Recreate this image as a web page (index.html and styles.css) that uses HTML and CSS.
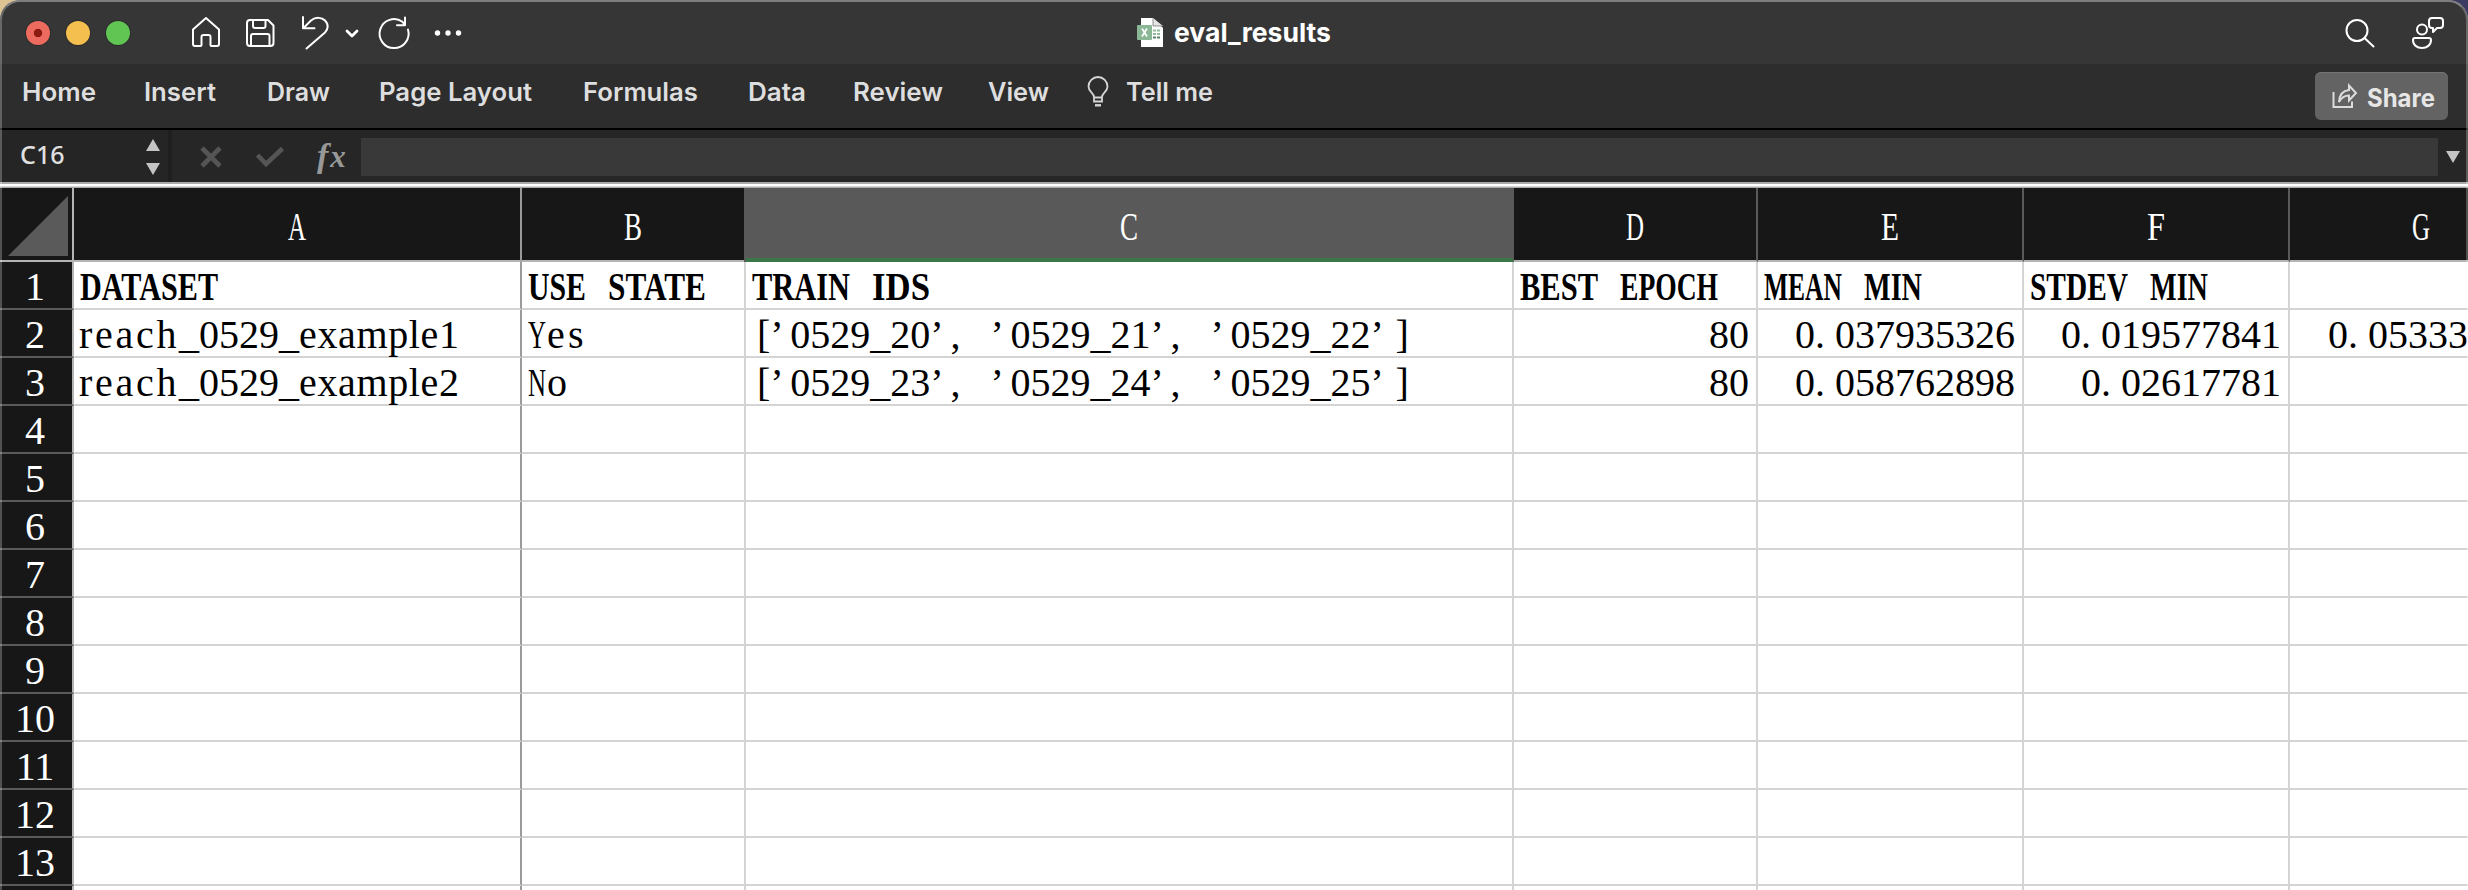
FILE: index.html
```html
<!DOCTYPE html>
<html lang="en">
<head>
<meta charset="utf-8">
<title>eval_results</title>
<link rel="stylesheet" href="styles.css">
</head>
<body>
<div class="desktop">
<div class="window">
  <header class="titlebar">
    <div class="lights"><i class="light red"></i><i class="light amber"></i><i class="light green"></i></div>
    <svg class="tools" width="280" height="64" viewBox="190 0 280 64">
      <path d="M193 28.5 L206 17 L219 28.5 V43 Q219 45 217 45 H211.500 Q210.500 45 210.500 44 V36 Q210.500 34 208.500 34 H203.500 Q201.500 34 201.500 36 V44 Q201.500 45 200.500 45 H195 Q193 45 193 43 Z"/>
      <path d="M250 19 H268 L273.500 24.500 V42 Q273.500 45 270.500 45 H250 Q247 45 247 42 V22 Q247 19 250 19 Z M253 19 V25 Q253 27 255 27 H263.500 Q265.500 27 265.500 25 V19 M251 45 V35 Q251 33 253 33 H267.500 Q269.500 33 269.500 35 V45"/>
      <path d="M303 16 V27.300 H314.500 M303.500 27 L311 19.500 C316 15.500 322 16.500 325 19.500 C329 23.500 328 28.500 325 31.500 L306.500 47.500"/>
      <path class="bold" d="M347 30 L352 35 L357 30"/>
      <path d="M408 28.500 A14.500 14.500 0 1 1 402.500 20.800 L405 24 M405 16.500 V24.300 H397"/>
      <g class="dots"><circle cx="437.500" cy="32" r="2.700"/><circle cx="448" cy="32" r="2.700"/><circle cx="458.500" cy="32" r="2.700"/></g>
    </svg>
    <div class="doc">
      <svg width="28" height="32" viewBox="0 0 28 32">
        <path d="M5 1 H17 L27 11 V30 H5 Z" fill="#fff"/>
        <path d="M17 1 V9 H27" fill="#e4e4e4" stroke="#777" stroke-width=".8"/>
        <path d="M17 12.500h3v2h-3z M21 12.500h3v2h-3z M17 16h3v2h-3z M21 16h3v2h-3z" fill="#8fbb9b"/>
        <path d="M17 19.500h3v2h-3z M21 19.500h3v2h-3z" fill="#5f8069"/>
        <rect x="1" y="8" width="15" height="15" rx="1" fill="#8ab897"/>
        <path d="M6 11.500 L11 19.500 M11 11.500 L6 19.500" stroke="#fff" stroke-width="1.700"/>
      </svg>
      <span class="fit" data-w="157">eval_results</span>
    </div>
    <svg class="right-tools" width="110" height="64" viewBox="2340 0 110 64">
      <circle cx="2357" cy="29.500" r="10.500"/><path d="M2364.500 37 L2373.500 45.500"/>
      <circle cx="2422" cy="28.500" r="5"/>
      <path d="M2415 37 H2429 Q2431 37 2431 39 C2431 44 2427 47 2422 47 C2417 47 2413 44 2413 39 Q2413 37 2415 37 Z"/>
      <path d="M2432 17 H2440 Q2443 17 2443 20 V24 Q2443 27 2440 27 H2437 L2433 31 V27 H2432 Q2429 27 2429 24 V20 Q2429 17 2432 17 Z"/>
    </svg>
  </header>

  <nav class="ribbon">
    <div class="tabs">
      <span class="fit" data-w="74">Home</span>
      <span class="fit" data-w="72">Insert</span>
      <span class="fit" data-w="63">Draw</span>
      <span class="fit" data-w="153">Page Layout</span>
      <span class="fit" data-w="115">Formulas</span>
      <span class="fit" data-w="58">Data</span>
      <span class="fit" data-w="90">Review</span>
      <span class="fit" data-w="61">View</span>
      <svg width="24" height="34" viewBox="0 0 24 34">
        <path d="M8 21 C8 17 2.500 16 2.500 10.500 A9.500 9.500 0 0 1 21.500 10.500 C21.500 16 16 17 16 21 V25.500 H8 Z M8 21.500 H16"/>
        <path class="base" d="M9 29.300 H15"/>
      </svg>
      <span class="fit" data-w="87">Tell me</span>
    </div>
    <div class="share">
      <svg width="26" height="26" viewBox="0 0 26 26">
        <path d="M1.500 9 V24 H20 V18.500"/>
        <path d="M7 19 C7.500 11 12 7.500 17 7 V2.500 L24 10 L17 17.500 V12.500 C12 12.500 9.500 14.500 7 19 Z"/>
      </svg>
      <span class="fit" data-w="68">Share</span>
    </div>
  </nav>

  <div class="formula">
    <div class="namebox"><span>C16</span>
      <svg width="14" height="36" viewBox="0 0 14 36"><path d="M7 0 L14 12 H0 Z M0 24 H14 L7 36 Z"/></svg>
    </div>
    <svg class="actions" width="120" height="52" viewBox="190 130 120 52">
      <path d="M202 148 L220 166 M220 148 L202 166"/>
      <path d="M257.500 155 L266 164 L282.500 148.500"/>
    </svg>
    <span class="fx"><span class="f">f</span>x</span>
    <div class="input"></div>
    <svg class="drop" width="14" height="12" viewBox="0 0 14 12"><path d="M0 0 H14 L7 12 Z"/></svg>
  </div>

  <main class="sheet">
    <div class="row head">
      <div class="num corner"><svg width="60" height="60" viewBox="0 0 60 60"><path d="M60 0 V60 H0 Z"/></svg></div>
      <div class="a"><span class="w">A</span></div><div><span class="w">B</span></div><div class="sel"><span class="w">C</span></div><div><span class="w">D</span></div><div><span class="w">E</span></div><div><span class="w">F</span></div><div><span class="w">G</span></div>
    </div>
    <div class="row titles">
      <div class="num">1</div>
      <div class="a"><span class="w">DATASET</span></div>
      <div><span class="w">USE</span> <span class="w">STATE</span></div>
      <div><span class="w">TRAIN</span> <span class="w">IDS</span></div>
      <div><span class="w">BEST</span> <span class="w">EPOCH</span></div>
      <div><span class="w">MEAN</span> <span class="w">MIN</span></div>
      <div><span class="w">STDEV</span> <span class="w">MIN</span></div>
      <div></div>
    </div>
    <div class="row">
      <div class="num">2</div>
      <div class="a"><span class="reach">reach</span>_0529_<span class="exam">example</span>1</div>
      <div><span class="w">Y</span><span class="es">es</span></div>
      <div class="list">[<span class="q">’</span>0529_20<span class="q">’</span><span class="p">, </span><span class="q">’</span>0529_21<span class="q">’</span><span class="p">, </span><span class="q">’</span>0529_22<span class="q">’</span><span class="end">]</span></div>
      <div class="val">80</div>
      <div class="val">0<span class="p">.</span>037935326</div>
      <div class="val">0<span class="p">.</span>019577841</div>
      <div class="val clipped">0<span class="p">.</span>05333</div>
    </div>
    <div class="row">
      <div class="num">3</div>
      <div class="a"><span class="reach">reach</span>_0529_<span class="exam">example</span>2</div>
      <div><span class="w">N</span>o</div>
      <div class="list">[<span class="q">’</span>0529_23<span class="q">’</span><span class="p">, </span><span class="q">’</span>0529_24<span class="q">’</span><span class="p">, </span><span class="q">’</span>0529_25<span class="q">’</span><span class="end">]</span></div>
      <div class="val">80</div>
      <div class="val">0<span class="p">.</span>058762898</div>
      <div class="val">0<span class="p">.</span>02617781</div>
      <div></div>
    </div>
    <div class="row"><div class="num">4</div><div class="a"></div><div></div><div></div><div></div><div></div><div></div><div></div></div>
    <div class="row"><div class="num">5</div><div class="a"></div><div></div><div></div><div></div><div></div><div></div><div></div></div>
    <div class="row"><div class="num">6</div><div class="a"></div><div></div><div></div><div></div><div></div><div></div><div></div></div>
    <div class="row"><div class="num">7</div><div class="a"></div><div></div><div></div><div></div><div></div><div></div><div></div></div>
    <div class="row"><div class="num">8</div><div class="a"></div><div></div><div></div><div></div><div></div><div></div><div></div></div>
    <div class="row"><div class="num">9</div><div class="a"></div><div></div><div></div><div></div><div></div><div></div><div></div></div>
    <div class="row"><div class="num">10</div><div class="a"></div><div></div><div></div><div></div><div></div><div></div><div></div></div>
    <div class="row"><div class="num">11</div><div class="a"></div><div></div><div></div><div></div><div></div><div></div><div></div></div>
    <div class="row"><div class="num">12</div><div class="a"></div><div></div><div></div><div></div><div></div><div></div><div></div></div>
    <div class="row"><div class="num">13</div><div class="a"></div><div></div><div></div><div></div><div></div><div></div><div></div></div>
    <div class="row"><div class="num"></div><div class="a"></div><div></div><div></div><div></div><div></div><div></div><div></div></div>
  </main>
</div>
</div>
<script src="fit.js"></script>
</body>
</html>
```
FILE: styles.css
```css
* { box-sizing: border-box; }
body { margin: 0; overflow: hidden; }
.desktop {
  width: 2468px; height: 890px;
  background: linear-gradient(90deg, #dcc391 50%, #3a3a62 50%);
}
.window {
  position: relative;
  display: flex; flex-direction: column;
  height: 890px; overflow: hidden;
  border-radius: 20px 20px 0 0;
  background: #fff;
  font-family: Inter, "Liberation Sans", sans-serif;
}
/* translucent rim over the window edges */
.window::after {
  content: ""; position: absolute; inset: 0; pointer-events: none;
  border: 2px solid rgba(255, 255, 255, .25);
  border-top-color: rgba(255, 255, 255, .36);
  border-bottom: 0;
  border-radius: 20px 20px 0 0;
}
svg { display: block; flex: none; }
.fit { display: inline-block; white-space: nowrap; transform-origin: 0 50%; }

.titlebar {
  flex: none; height: 64px; background: #363636;
  display: grid; grid-template-columns: 190px 280px 1fr 110px 18px;
  align-items: center;
}
.lights { display: flex; gap: 16px; padding-left: 26px; }
.light { width: 24px; height: 24px; border-radius: 50%; box-shadow: 0 0 0 1px rgba(0,0,0,.2); }
.red { background: radial-gradient(circle, #8c1a10 0 3.8px, #ec6a5e 4.6px); }
.amber { background: #f5bf4f; }
.green { background: #61c554; }
.tools, .right-tools { fill: none; stroke: #fff; stroke-width: 2; stroke-linejoin: round; stroke-linecap: round; }
.tools .bold { stroke-width: 2.8; }
.tools .dots { fill: #fff; stroke: none; }
.doc {
  display: flex; align-items: center; gap: 10px;
  padding-left: 666px; color: #fff; font-weight: 700; font-size: 26px; line-height: 64px;
}
.doc .fit { padding-top: 1px; }

.ribbon {
  flex: none; height: 66px; background: #2d2d2d; border-bottom: 2px solid #000;
  display: flex; justify-content: space-between; align-items: flex-start;
  color: #dedede; font-size: 25.5px; font-weight: 600;
}
.tabs { display: grid; height: 58px; align-items: center; padding-left: 21.5px;
  grid-template-columns: 122px 123px 112px 204px 165.500px 104.500px 135px 98px 40px auto; }
.tabs .fit { padding-bottom: 3px; }
.tabs svg { fill: none; stroke: #d6d6d6; stroke-width: 1.8; }
.tabs .base { stroke-width: 2.4; }
.share {
  display: flex; align-items: center; gap: 9px;
  width: 133px; height: 48px; margin: 8px 20px 0 0; padding: 3px 0 0 17px;
  border-radius: 6px; background: #636363; box-shadow: inset 0 1px #747474;
  color: #e6e6e6; font-size: 25px; font-weight: 700;
}
.share svg { margin-top: -4px; fill: none; stroke: #dcdcdc; stroke-width: 2; }

.formula { flex: none; height: 52px; background: #262626; display: flex; align-items: center; }
.namebox {
  width: 172px; height: 52px; border-right: 4px solid #1f1f1f; background: #252525;
  display: flex; justify-content: space-between; align-items: center; padding: 0 8px 0 20px;
  color: #e0e0e0; font: 500 25px/48px "Noto Sans", sans-serif;
}
.namebox span { margin-top: -5px; }
.namebox svg { margin-top: 2px; }
.namebox path, .drop path { fill: #c4c4c4; }
.actions { margin-left: 18px; fill: none; stroke: #555; stroke-width: 4.6; }
.fx { width: 51px; padding-left: 7px; color: #989898; font: italic 700 31px/48px "Liberation Serif", serif; white-space: nowrap; }
.fx .f { font-size: 34px; margin-right: 2px; }
.input { width: 2077px; height: 38px; background: #393939; margin-top: 2px; }
.drop { margin: 2px 0 0 8px; }

.sheet {
  flex: 1; overflow: hidden; border-top: 6px solid #f6f6f6;
  border-image: linear-gradient(#aaa 0 1.500px, #fff 2px 4px, #aaa 5px) 6 0 0 0;
  font: 40px/50px "Liberation Serif", "Noto Sans CJK SC", serif; color: #000;
}
.row { display: grid; grid-template-columns: 74px 448px 224px 768px 244px 266px 266px 264px; width: 2554px; height: 48px; }
.row > div {
  height: 48px; padding-left: 5px; border: solid #d4d4d4; border-width: 0 2px 2px 0;
  white-space: pre; word-spacing: 10px;
}
.row > .a { border-right-color: #9a9a9a; }
.row > .num {
  padding: 0 2px 0 0; text-align: center; color: #fff; background: #171717;
  border-color: #5a5a5a #b4b4b4 #5a5a5a #5a5a5a;
}
.row.head, .row.head > div { height: 74px; }
.row.head > div {
  padding: 0; text-align: center; line-height: 77px; color: #fff; background: #171717;
  border-color: #5a5a5a; border-bottom-color: #b4b4b4;
}
.row.head > .a { border-right-color: #9a9a9a; }
.row.head > .corner { padding: 8px 0 0 8px; border-right-color: #b4b4b4; }
.corner path { fill: #5a5a5a; }
.row.head > .sel { background: #595959; box-shadow: -2px 0 #595959; border-right-color: #595959; border-bottom: 4px solid #3b7748; }
.titles { font-weight: 700; }
.titles .num { font-weight: 400; }
.w { display: inline-block; transform-origin: 0 50%; text-align: left; }
.row > .val { padding: 0 7px 0 0; text-align: right; }
.row > .clipped { padding-right: 84px; }
.reach { letter-spacing: 2.7px; }
.exam { letter-spacing: .63px; }
.es { letter-spacing: 3.3px; }
.row > .list { padding-left: 11px; letter-spacing: 0; }
.q { letter-spacing: 6.7px; }
.p { letter-spacing: 10px; word-spacing: 0; }
.end { padding-left: 5px; }
```
FILE: fit.js
```js
document.querySelectorAll('.w').forEach(function (el) {
  var pitch = 20 * el.textContent.length;
  var natural = el.getBoundingClientRect().width;
  el.style.width = pitch + 'px';
  el.style.transform = 'translateX(1px) scaleX(' + (pitch - 2) / natural + ')';
});
// Chrome labels keep the widths of their slots.
document.querySelectorAll('.fit').forEach(function (el) {
  var box = document.createRange();
  box.selectNodeContents(el);
  el.style.transform = 'scaleX(' + el.dataset.w / box.getBoundingClientRect().width + ')';
});
```
